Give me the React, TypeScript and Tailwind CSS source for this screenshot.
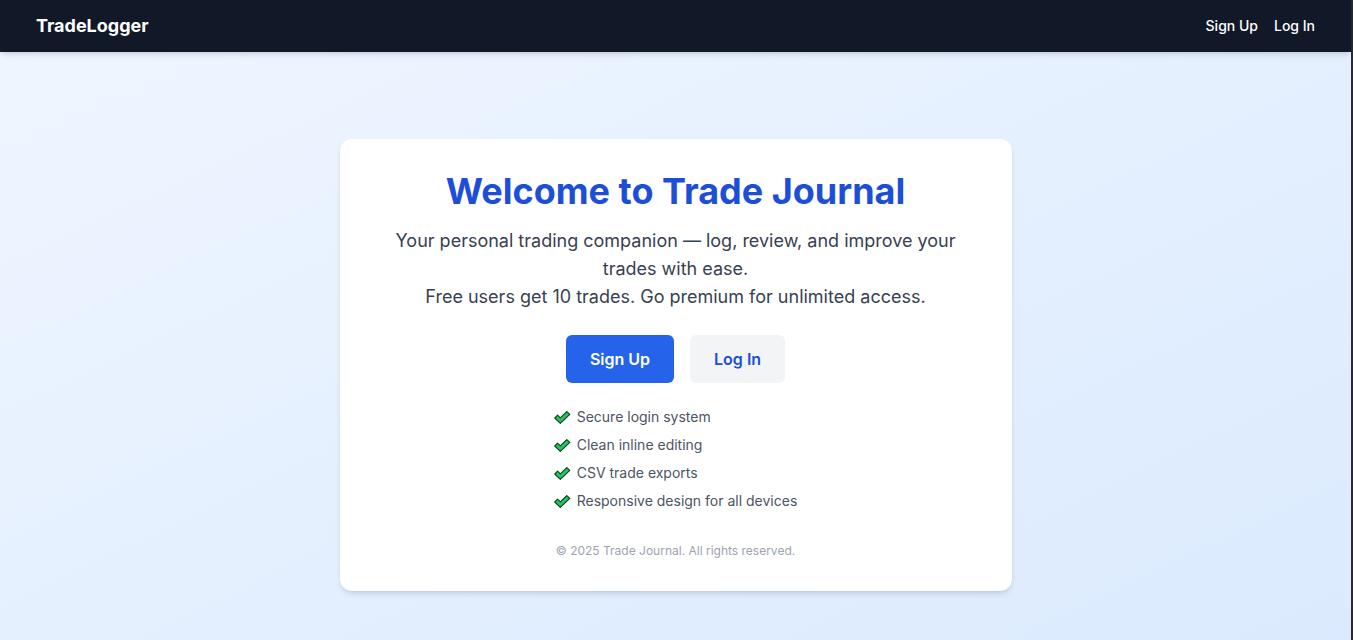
function Check() {
  return (
    <svg width="17" height="13" viewBox="0 0 17 13" className="shrink-0">
      <path
        d="M0.8 7 L3.6 4.2 L6.3 6.8 L12.8 0.6 L15.8 3.4 L6.3 12.3 Z"
        fill="#22c55e"
        stroke="#0f3d1f"
        strokeWidth="1.1"
        strokeLinejoin="round"
      />
    </svg>
  );
}

const features = [
  "Secure login system",
  "Clean inline editing",
  "CSV trade exports",
  "Responsive design for all devices",
];

export default function App() {
  return (
    <div className="min-h-screen flex flex-col border-r-2 border-[#2a2a2e] bg-gradient-to-br from-[#eff6ff] to-[#dbeafe] font-['Inter',sans-serif]">
      <nav className="h-[52px] bg-[#111827] shadow-md flex items-center justify-between px-9">
        <span className="text-white text-lg font-bold">TradeLogger</span>
        <div className="flex gap-4 text-sm font-medium text-white">
          <a href="#">Sign Up</a>
          <a href="#">Log In</a>
        </div>
      </nav>

      <main className="flex-1 flex justify-center pt-[87px] pb-12">
        <div className="w-[672px] h-fit bg-white rounded-xl shadow-md p-8 text-center">
          <h1 className="text-4xl font-bold text-[#1d4ed8]">Welcome to Trade Journal</h1>
          <p className="mt-4 text-lg leading-7 text-[#374151]">
            Your personal trading companion — log, review, and improve your trades with ease.
            <br />
            Free users get 10 trades. Go premium for unlimited access.
          </p>

          <div className="mt-6 flex justify-center gap-4">
            <button className="bg-[#2563eb] text-white font-semibold px-6 py-3 rounded-md">
              Sign Up
            </button>
            <button className="bg-[#f3f4f6] text-[#1d4ed8] font-semibold px-6 py-3 rounded-md">
              Log In
            </button>
          </div>

          <ul className="mt-6 inline-flex flex-col gap-2 text-left text-sm text-[#4b5563]">
            {features.map((f) => (
              <li key={f} className="flex items-center gap-[6px]">
                <Check />
                <span>{f}</span>
              </li>
            ))}
          </ul>

          <p className="mt-8 text-xs text-[#9ca3af]">© 2025 Trade Journal. All rights reserved.</p>
        </div>
      </main>
    </div>
  );
}
